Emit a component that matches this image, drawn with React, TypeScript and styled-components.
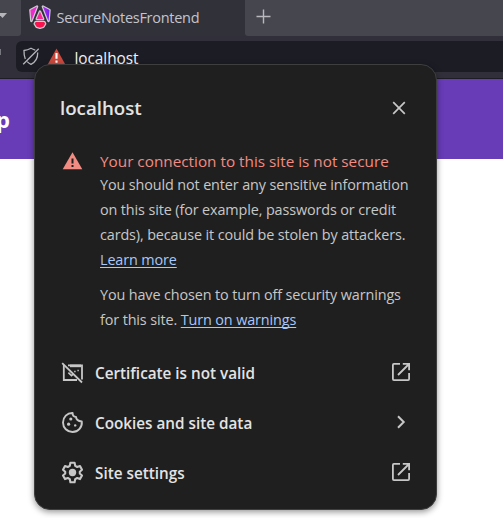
import React from 'react';
import styled, { createGlobalStyle } from 'styled-components';

const Global = createGlobalStyle`
  * { box-sizing: border-box; }
  html, body { margin: 0; overflow: hidden; background: #fff; }
  body { font-family: 'Open Sans', 'Noto Sans', sans-serif; }
  svg { display: block; flex: none; }
  p { margin: 0; }
`;

const Window = styled.div`
  position: relative;
  width: 503px;
  height: 518px;
  overflow: hidden;
  background: #fff;
`;

const TabStrip = styled.div`
  display: flex;
  height: 36px;
  background: #31313a;
`;

const StripEnd = styled.div<{ $side: 'left' | 'right' }>`
  flex: ${p => (p.$side === 'left' ? '0 0 21px' : '1')};
  background: #46464e;
  border-radius: ${p => (p.$side === 'left' ? '0 0 3px 0' : '0 0 0 3px')};
  padding: ${p => (p.$side === 'left' ? '13px 0 0' : '9px 0 0 11px')};
`;

const Tab = styled.div`
  display: flex;
  align-items: flex-start;
  width: 224px;
  padding: 5px 0 0 7px;
`;

const TabTitle = styled.span`
  margin: 3px 0 0 4.5px;
  font-size: 14.5px;
  line-height: 20px;
  letter-spacing: -0.27px;
  white-space: nowrap;
  color: #c4c4cc;
`;

const Toolbar = styled.div`
  display: flex;
  height: 43px;
  padding: 5px 0 6px;
  background: #31303a;
  border-bottom: 1px solid #1e1d26;
`;

const ReloadEdge = styled.div`
  width: 1px;
  height: 6px;
  margin: 8px 15px 0 0;
  background: #77777f;
`;

const AddressBar = styled.div`
  display: flex;
  flex: 1;
  padding-left: 6px;
  background: #1c1c25;
  border-radius: 6px 0 0 6px;
`;

const Address = styled.span`
  margin: 8px 0 0 9px;
  font-size: 15.4px;
  line-height: 20px;
  letter-spacing: -0.05px;
  color: #f3f3f5;
`;

const PageHeader = styled.div`
  height: 80px;
  padding-top: 24px;
  background: #683bb7;
  color: #fff;
  font-size: 22px;
  font-weight: 700;
  line-height: 32px;
  text-indent: -4px;
`;

const Popup = styled.section`
  position: absolute;
  left: 34px;
  top: 64px;
  width: 403px;
  height: 446px;
  padding: 0 25px;
  border: 1px solid #3e3e3f;
  border-radius: 16px;
  background: #1f1f1f;
  box-shadow: 0 2px 6px rgba(0, 0, 0, 0.42);
`;

const PopupHeader = styled.header`
  display: flex;
  justify-content: space-between;
  padding: 30px 5.5px 0 0;
  height: 87px;
`;

const Title = styled.h1`
  margin: 0;
  font-size: 18.7px;
  line-height: 26px;
  font-weight: 600;
  color: #e3e3e3;
`;

const Details = styled.div`
  display: flex;
  gap: 17px;
  padding-left: 2px;
  height: 195px;
`;

const WarningHeading = styled.h2`
  margin: -1px 0 0;
  font-size: 15.3px;
  font-weight: 400;
  line-height: 21px;
  white-space: nowrap;
  color: #f28b82;
`;

const Paragraph = styled.p`
  font-size: 14.4px;
  line-height: 25px;
  letter-spacing: -0.12px;
  white-space: nowrap;
  color: #c7c7c7;
  & + & { margin-top: 10px; }
`;

const Link = styled.a`
  color: #a8c7fa;
  text-decoration: underline;
  text-decoration-thickness: 1px;
  text-underline-offset: 2px;
  text-decoration-skip-ink: none;
`;

const Row = styled.div`
  display: flex;
  align-items: center;
  height: 50px;
`;

const RowLabel = styled.span`
  flex: 1;
  margin: 2px 0 0 10px;
  font-size: 15.28px;
  line-height: 22px;
  font-weight: 600;
  color: #e3e3e3;
`;

const IconSlot = styled.span<{ $top: number; $left?: number }>`
  display: block;
  padding-top: ${p => p.$top}px;
  margin-left: ${p => p.$left ?? 0}px;
`;

const AngularLogo = () => (
  <svg width="24" height="24" viewBox="-9 -9 241 254">
    <defs>
      <linearGradient id="pinkViolet" gradientUnits="userSpaceOnUse" x1="0" y1="0" x2="222" y2="0">
        <stop offset="0" stopColor="#fb2cc0" />
        <stop offset="0.6" stopColor="#c22be8" />
        <stop offset="1" stopColor="#6a1cf5" />
      </linearGradient>
    </defs>
    <g stroke="#cfc9d3" strokeWidth="26" strokeLinejoin="round" paintOrder="stroke">
      <path d="M212 44L202 160L142 8ZM20 160L10 44L80 8Z" fill="url(#pinkViolet)" />
      <path d="M166 190L146 222L111 232L76 222L56 190L66 170H156Z" fill="#fa124f" />
      <path d="M111 60L145 140H77Z" fill="#f82896" />
    </g>
  </svg>
);

const ShieldOff = () => (
  <svg width="18" height="19" viewBox="0 0 18 19" fill="none" stroke="#b4b4bb" strokeWidth="1.3">
    <path d="M15.7 5.6C15.8 11.5 14 15 9 17.4C7.4 16.6 6.2 15.7 5.2 14.6M3.3 12C2.2 9.6 1.9 7 2 3.5C5 3.3 7 2.5 9 1.3C10.5 2.2 11.8 2.7 13.3 3.1" />
    <path d="M1.2 17.2L16.7 1.8" />
  </svg>
);

const AddressWarning = () => (
  <svg width="19" height="17" viewBox="0 0 19 17">
    <path d="M9.5 .6L18.6 17H.4Z" fill="#c94a3d" />
    <path d="M9.5 5V10.8M9.5 12.6V14.8" stroke="#fff" strokeWidth="2.1" />
  </svg>
);

const Warning = () => (
  <svg width="21" height="18" viewBox="0 0 21 18">
    <path d="M10.5 .3L20.3 17.3H.7Z" fill="#f28b82" />
    <path d="M10.5 6.5V11.4M10.5 13V15" stroke="#1f1f1f" strokeWidth="2" />
  </svg>
);

const Close = () => (
  <svg width="14" height="14" viewBox="0 0 14 14" stroke="#c7c7c7" strokeWidth="1.7">
    <path d="M1.2 1.2L12.8 12.8M12.8 1.2L1.2 12.8" />
  </svg>
);

const Plus = () => (
  <svg width="15" height="15" viewBox="0 0 15 15" stroke="#b9b9bd" strokeWidth="1.4">
    <path d="M.5 7.5H14.5M7.5 .5V14.5" />
  </svg>
);

const Caret = () => (
  <svg width="8" height="6" viewBox="0 0 8 6">
    <path d="M-2 0H7L2.5 5Z" fill="#b5b5ba" />
  </svg>
);

const CertificateOff = () => (
  <svg width="25" height="25" viewBox="0 0 25 25" fill="none" stroke="#c7c7c7" strokeWidth="1.8">
    <path d="M8 5.4H22V19.5M17 20H3.8V5" />
    <path d="M10 5.9H21" strokeWidth="2.6" />
    <path d="M2.2 3.2L22 22.5" />
    <path d="M8.4 12.6L11.5 15.6L13 14.4" strokeWidth="1.6" />
    <path d="M14.2 11.6H15.6M17.4 10.6H18.8" strokeWidth="1.5" />
  </svg>
);

const Cookie = () => (
  <svg width="25" height="25" viewBox="0 0 25 25" fill="#c7c7c7">
    <path d="M12.6 3C12.5 5.4 13.8 6.9 16 6.9C16.1 9.4 17.5 11.1 21.8 11.5C22.4 17 18.3 22 12.5 22C7.2 22 3 17.8 3 12.5C3 7.2 7.2 2.8 12.6 3Z" fill="none" stroke="#c7c7c7" strokeWidth="1.9" strokeLinejoin="round" />
    <circle cx="10.8" cy="9" r="1.6" />
    <circle cx="8.6" cy="14.2" r="1.6" />
    <circle cx="15.2" cy="15.4" r="1.2" />
  </svg>
);

const Gear = () => (
  <svg width="25" height="25" viewBox="0 0 25 25">
    <path d="M10.4 2.8H14.6L15.2 5.9L17.2 7L20 6L22 9.7L19.8 11.7V13.5L22 15.5L20 19.1L17.2 18L15.2 19.1L14.6 22.2H10.4L9.8 19.1L7.8 18L5 19.1L3 15.5L5.2 13.5V11.7L3 9.7L5 6L7.8 7L9.8 5.9Z" fill="none" stroke="#c7c7c7" strokeWidth="2.1" strokeLinejoin="round" />
    <circle cx="12.5" cy="12.5" r="3.7" fill="#c7c7c7" />
  </svg>
);

const OpenExternal = () => (
  <svg width="20" height="20" viewBox="0 0 20 20" fill="none" stroke="#c7c7c7" strokeWidth="1.8">
    <path d="M9 1.9H2.9Q1.9 1.9 1.9 2.9V17.1Q1.9 18.1 2.9 18.1H17.1Q18.1 18.1 18.1 17.1V11" />
    <path d="M11.8 1.9H18.1V8.2M18 2L7 13" />
  </svg>
);

const Chevron = () => (
  <svg width="20" height="20" viewBox="0 0 20 20" fill="none" stroke="#c7c7c7" strokeWidth="2">
    <path d="M7 4.3L12.7 10L7 15.7" />
  </svg>
);

const rows = [
  { label: 'Certificate is not valid', Icon: CertificateOff, Action: OpenExternal },
  { label: 'Cookies and site data', Icon: Cookie, Action: Chevron },
  { label: 'Site settings', Icon: Gear, Action: OpenExternal },
];

export default function App() {
  return (
    <Window>
      <Global />
      <TabStrip>
        <StripEnd $side="left"><Caret /></StripEnd>
        <Tab>
          <AngularLogo />
          <TabTitle>SecureNotesFrontend</TabTitle>
        </Tab>
        <StripEnd $side="right"><Plus /></StripEnd>
      </TabStrip>
      <Toolbar>
        <ReloadEdge />
        <AddressBar>
          <IconSlot $top={6}><ShieldOff /></IconSlot>
          <IconSlot $top={7} $left={6.5}><AddressWarning /></IconSlot>
          <Address>localhost</Address>
        </AddressBar>
      </Toolbar>
      <PageHeader>p</PageHeader>
      <Popup>
        <PopupHeader>
          <Title>localhost</Title>
          <IconSlot $top={6}><Close /></IconSlot>
        </PopupHeader>
        <Details>
          <Warning />
          <div>
            <WarningHeading>Your connection to this site is not secure</WarningHeading>
            <Paragraph>
              You should not enter any sensitive information<br />
              on this site (for example, passwords or credit<br />
              cards), because it could be stolen by attackers.<br />
              <Link>Learn more</Link>
            </Paragraph>
            <Paragraph>
              You have chosen to turn off security warnings<br />
              for this site. <Link>Turn on warnings</Link>
            </Paragraph>
          </div>
        </Details>
        {rows.map(({ label, Icon, Action }) => (
          <Row key={label}>
            <Icon />
            <RowLabel>{label}</RowLabel>
            <Action />
          </Row>
        ))}
      </Popup>
    </Window>
  );
}
